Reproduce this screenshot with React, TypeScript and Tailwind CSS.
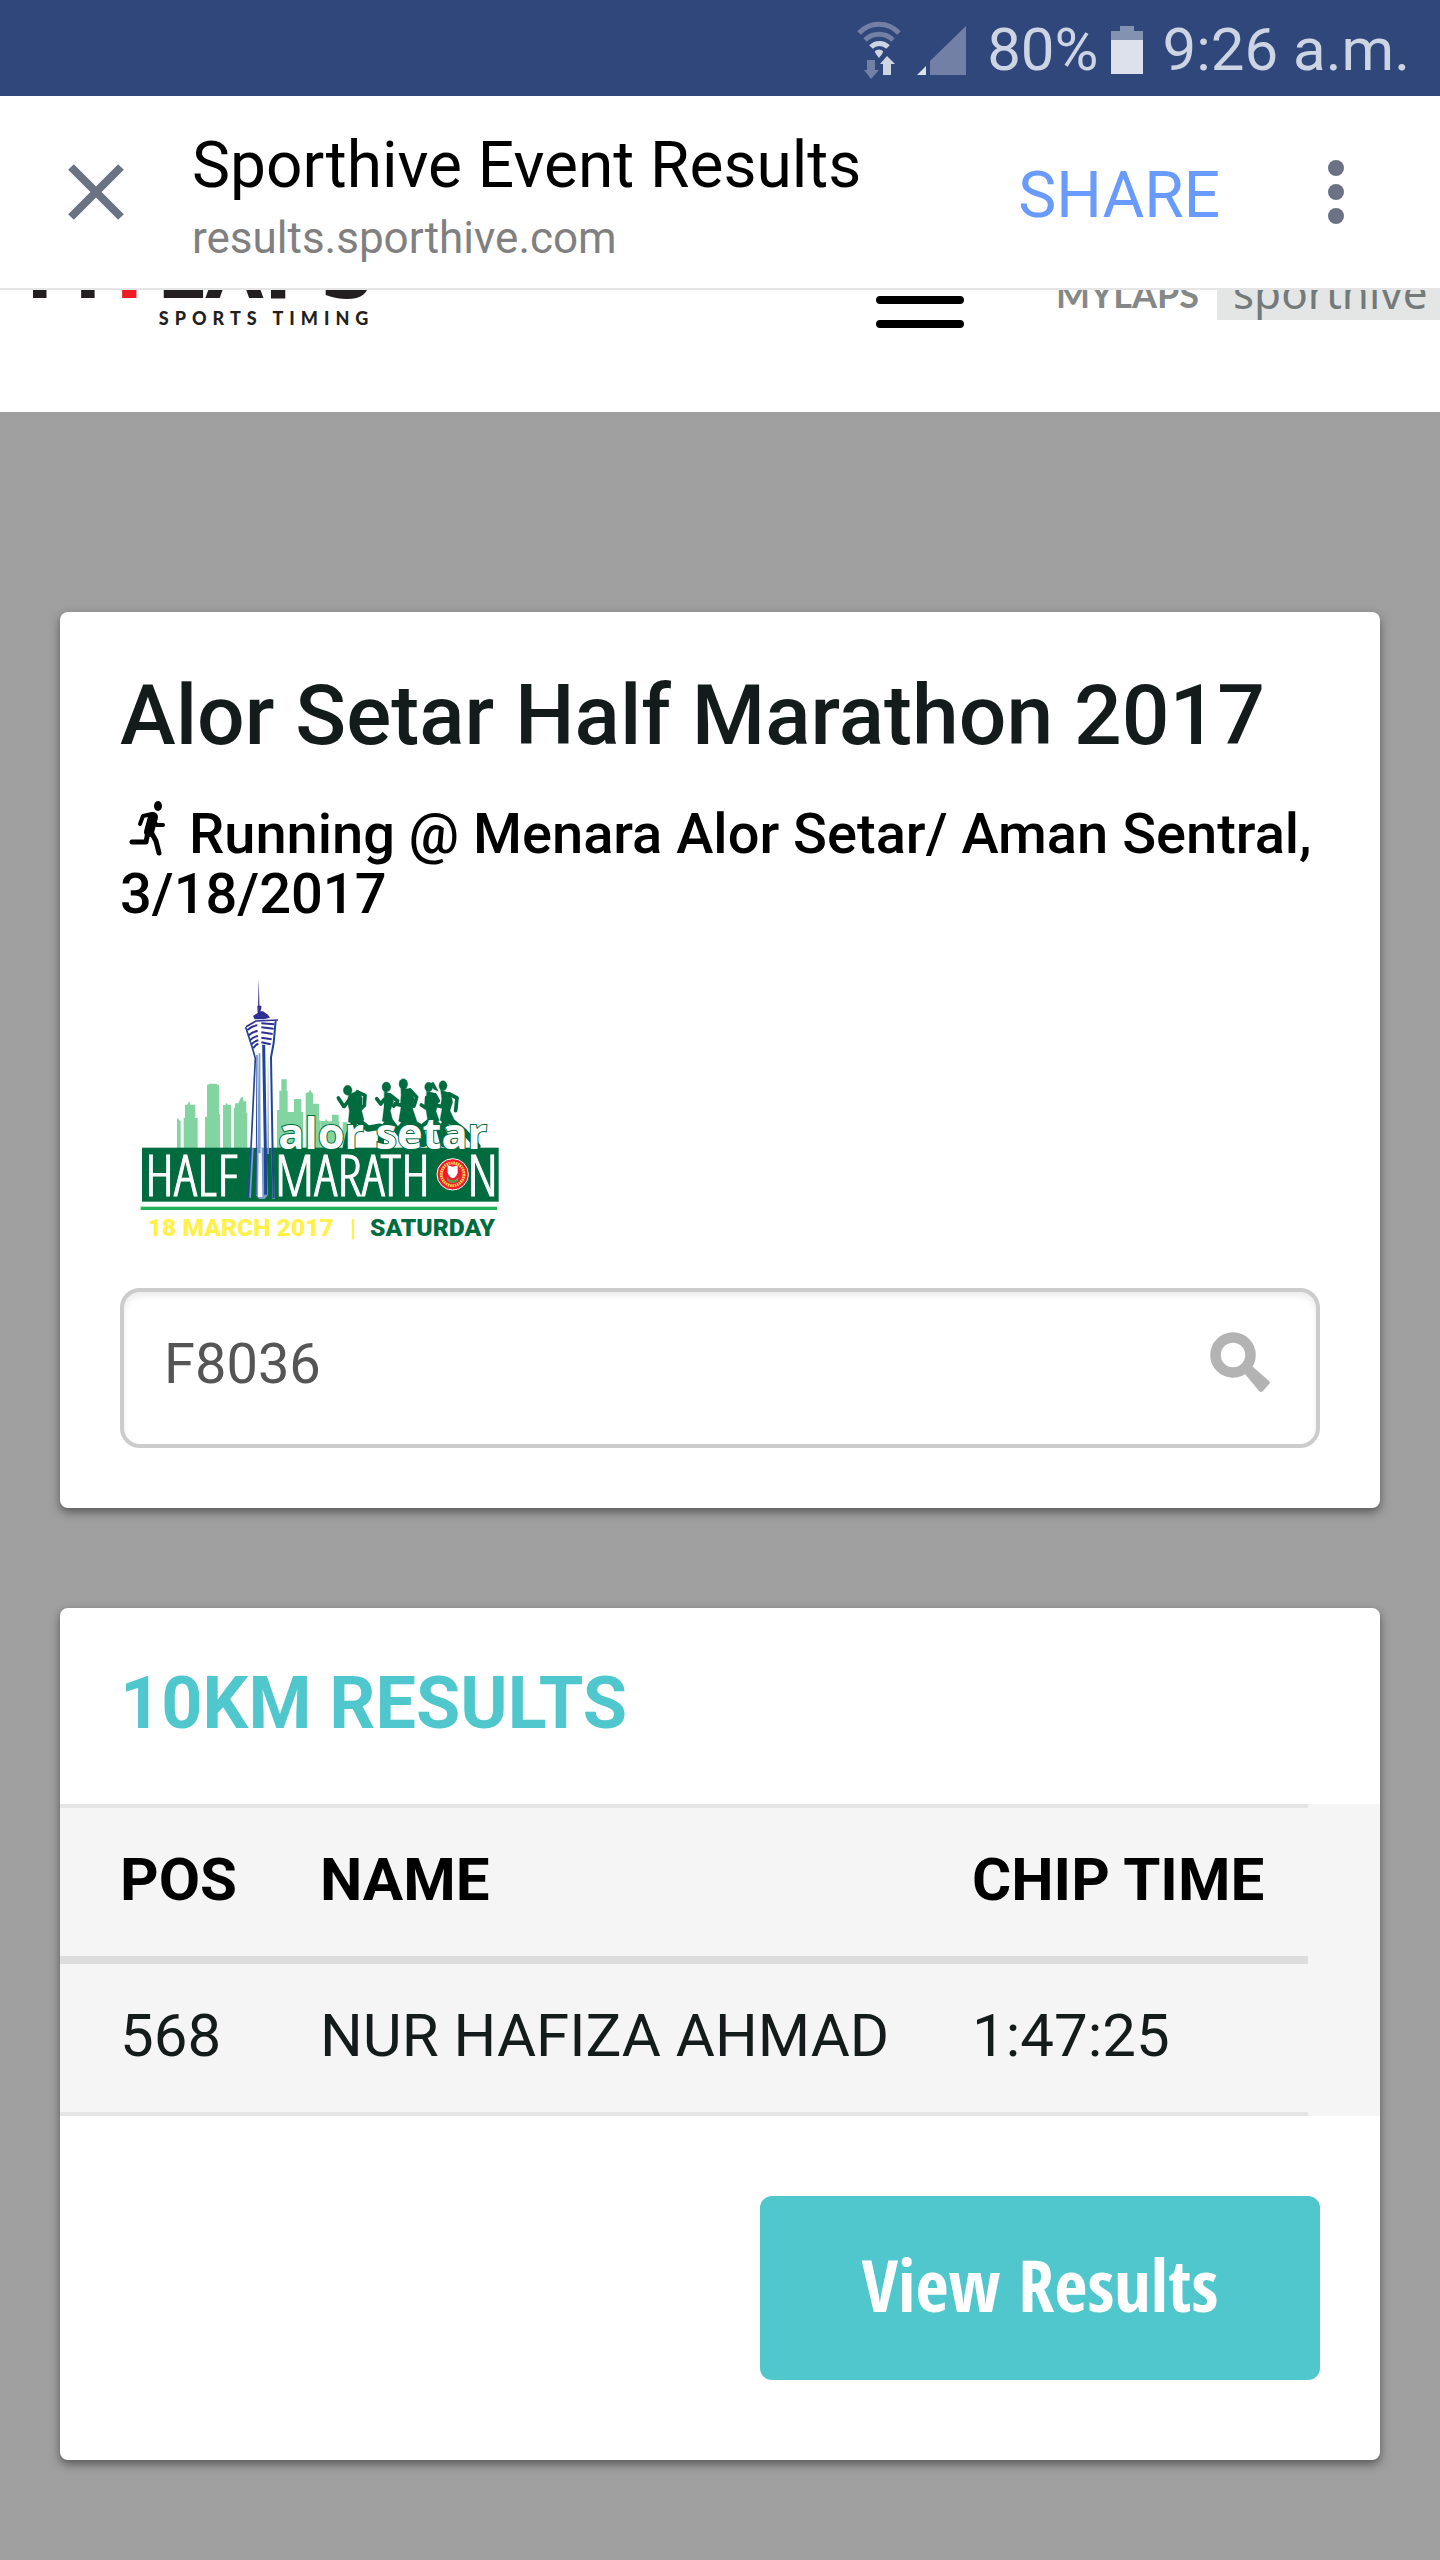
import { useState } from "react";

const results = [{ pos: "568", name: "NUR HAFIZA AHMAD", time: "1:47:25" }];

function WifiIcon() {
  return (
    <svg aria-hidden="true" viewBox="0 0 44 60" className="h-[60px] w-11" fill="none">
      <path d="M2 13a27 27 0 0 1 40 0" stroke="#7180a4" strokeWidth="5" />
      <path d="M8 20a20 20 0 0 1 28 0" stroke="#7180a4" strokeWidth="5" />
      <path d="M14 27a12 12 0 0 1 17 0" stroke="#cdd4e3" strokeWidth="5" />
      <path d="M18 31a6 6 0 0 1 8 0c0 3-2 4-4 7-2-3-4-4-4-7Z" fill="#cdd4e3" />
      <path d="M10 40h8v10h4l-8 9-7-9h3Z" fill="#7180a4" />
      <path d="M26 55h8V44h4l-8-8-7 8h3Z" fill="#cdd4e3" />
    </svg>
  );
}

function SignalIcon() {
  return (
    <svg aria-hidden="true" viewBox="0 0 50 50" className="h-[50px] w-[50px]">
      <path d="M13 36 49 1v49H13Z" fill="#7180a4" />
      <path d="M0 50l9-9v9Z" fill="#dde1eb" />
    </svg>
  );
}

function BatteryIcon() {
  return (
    <svg aria-hidden="true" viewBox="0 0 32 48" className="h-12 w-8">
      <path d="M0 5h9V0h14v5h9v10H0Z" fill="#8492b2" />
      <path d="M0 14h32v34H0Z" fill="#dde1eb" />
    </svg>
  );
}

function RunnerIcon() {
  return (
    <svg
      aria-hidden="true"
      viewBox="0 0 36 56"
      className="-mt-4 mr-6 ml-[9px] inline-block h-14 w-9 align-[-4px]"
      fill="none"
      stroke="#000"
      strokeLinecap="round"
      strokeLinejoin="round"
    >
      <ellipse cx="29" cy="5" rx="4" ry="5" fill="#000" stroke="none" />
      <path d="M11 23l3-8 9-2" strokeWidth="4" />
      <path d="M24 16l-4 15" strokeWidth="10" />
      <path d="M25 21l3 3h6" strokeWidth="4" />
      <path d="M19 31l-2 10H3" strokeWidth="5" />
      <path d="M22 31l5 9 3 12" strokeWidth="5" />
    </svg>
  );
}

function SearchIcon() {
  return (
    <svg aria-hidden="true" viewBox="0 0 60 61" className="h-[61px] w-[60px]">
      <circle cx="23" cy="23" r="17.500" fill="none" stroke="#b3b3b3" strokeWidth="10.500" />
      <path d="M42 34 59 49q2 2 0 3l-6 7q-2 2-4 0L35 42Z" fill="#b3b3b3" />
    </svg>
  );
}

function EventLogo() {
  return (
    <svg
      role="img"
      aria-label="Alor Setar Half Marathon, 18 March 2017, Saturday"
      viewBox="30 0 1230 840"
      className="mt-9 h-[280px] w-[410px]"
    >
      {/* skyline */}
      <g fill="#82d5a1">
        <path d="M201 474l11 10v82h-11ZM221 566v-92h4v-40h7l5-11 4 11h15v40h7v92Z" />
        <path d="M285 566v-96h6v-94l8-5h18l10 5v86h3v104ZM339 566V435h7l4-7 4 7h9v131ZM372 566V443h3v-13h10l8-18h6l2 12h8v36h3v106Z" />
        <path d="M501 566V450h7v-58h6v-34h16v34h3v64h12v110ZM545 566V456h7v-39h22v39h5v110ZM587 480v-80l10-4 3-8 4 8 5 5v30h18v50h4v85h-44Z" />
        <path d="M631 566v-83h14l4-7 4 8h13v-20h20v20h2v82ZM698 487h14v80h-14Z" />
      </g>

      {/* runners */}
      <g fill="#006b3f" stroke="#006b3f" strokeLinecap="round" strokeLinejoin="round">
        <g strokeWidth="1">
          <ellipse cx="713" cy="391" rx="13" ry="15" />
          <ellipse cx="829" cy="381" rx="13" ry="15" />
          <ellipse cx="880" cy="372" rx="13" ry="16" />
          <ellipse cx="956" cy="381" rx="12" ry="14" />
          <ellipse cx="999" cy="377" rx="12" ry="15" />
          <path d="M962 370l8-4 15 28-14-6Z" />
          <path d="M717 403l28-11 12 22-2 38 7 28-25 14-22-8 3-34-6-30Z" />
          <path d="M823 394l20 8 8 22-10 28 10 40-34-8 5-44Z" />
          <path d="M873 386l28 0 12 30-5 30 12 36-30 14-24-12 8-48Z" />
          <path d="M950 394l26 6 10 22-8 32 10 28-34 6-6-40Z" />
          <path d="M992 390l30 10 6 26-8 26 16 34-30 10-16-16 8-44Z" />
        </g>
        <g fill="none" strokeWidth="11">
          <path d="M742 396l23 10-2 30-11 11M722 414l-20 26-17-26" />
          <path d="M840 405l23 18-12 15M823 418l-11 14-12-16" />
          <path d="M900 390l20 22-8 26M878 412l-2 24-20-4" />
          <path d="M975 405l10 18M950 412l-2 32-14-9" />
          <path d="M1018 402l23 12-4 38M1000 420l-4 20-28-6" />
        </g>
        <g fill="none" strokeWidth="19">
          <path d="M742 480l32 26 36-6M735 484l-18 38-9 38" />
          <path d="M838 482l-24 30-2 44M842 486l30 38 14 34" />
          <path d="M893 480l-25 28 20 46M900 482l32 20 12 48" />
          <path d="M968 478l-34 26 4 48M972 484l26 28 20 40" />
          <path d="M1018 478l-30 30 12 44M1022 482l42 34 38 42" />
        </g>
      </g>

      <rect x="96" y="563" width="1070" height="162" fill="#006b3f" />
      <rect x="92" y="740" width="1069" height="10" fill="#22b35b" />

      {/* tower */}
      <path
        d="M430 265l5 40-14 258h66l-4-258 8-60 8-64-56-4-34 14Z"
        fill="#fff"
      />
      <path d="M421 563l-7 148 9 3 8-151ZM440 563l-3 142 10 12h17l10-12-4-142ZM484 563l3 154h8l-6-154Z" fill="#7f9bc9" />
      <path d="M446 563l-2 148h13l-2-148Z" fill="#fff" />
      <path d="M446 55l3 100h-5Z" fill="#2e3192" />
      <path d="M442 137h12v8l-3 9h8l15 10 6 9-18 5h-28l-5-10 14-9Z" fill="#2e3192" />
      <g fill="none" stroke="#2e3192">
        <path d="M408 200l30-17 66-3" strokeWidth="5" />
        <path
          d="M412 210q16-13 30-14M454 190l39 3M416 226q12-11 27-13M454 202l37 4M420 241q10-11 24-13M454 217l34 5M425 253q8-10 20-12M454 233l31 5M430 265q7-12 15-14M454 247l28 6"
          strokeWidth="6"
        />
      </g>
      <g fill="none" stroke="#1f4596">
        <path d="M407 201l20 62 9 32-14 290-7 126" strokeWidth="5" />
        <path d="M497 182l-6 67-8 43 5 293 3 130" strokeWidth="6" />
        <path d="M461 254l5 310 1 140" strokeWidth="9" />
        <path d="M441 285l-2 300-1 120" strokeWidth="3" />
      </g>
      <path d="M446 280l-4 300h10l-1-300ZM474 262l3 320h-5Z" fill="#7f9bc9" />

      {/* lettering */}
      <g
        fill="#fff"
        stroke="#fff"
        strokeWidth="3"
        className="font-['Open_Sans_Condensed_Light','Open_Sans_Condensed','Open_Sans',sans-serif]"
      >
        <text x="105" y="707" fontSize="174" fontWeight="300">
          HALF
        </text>
        <text x="494" y="707" fontSize="174" fontWeight="300">
          MARATH
        </text>
        <text x="1072" y="707" fontSize="174" fontWeight="300">
          N
        </text>
      </g>
      <text
        x="505"
        y="567"
        fontSize="130"
        fontWeight="700"
        fill="#fff"
        stroke="#006b3f"
        strokeWidth="6"
        paintOrder="stroke"
        className="font-['Open_Sans',sans-serif]"
      >
        alor setar
      </text>
      <g fontSize="74" fontWeight="900" className="font-[Roboto,sans-serif]">
        <text x="113" y="827" fill="#fff04b">
          18 MARCH 2017
        </text>
        <text x="720" y="827" fill="#fff04b">
          |
        </text>
        <text x="780" y="827" fill="#006b3f">
          SATURDAY
        </text>
      </g>

      {/* state crest */}
      <circle cx="1028" cy="643" r="47" fill="#f5192d" stroke="#fff" strokeWidth="3" />
      <circle cx="1028" cy="643" r="34" fill="none" stroke="#fcd34a" strokeWidth="9" strokeDasharray="5 2" />
      <path d="M1010 650q18 22 36 0l-2 12q-16 14-32 0Z" fill="#4ca64c" />
      <path d="M1013 616l15 4 15-4v22q-3 12-15 17-12-5-15-17Z" fill="#fff" />
    </svg>
  );
}

function StatusBar() {
  return (
    <div className="flex h-24 items-center justify-end bg-[#2f477a] pt-1 pr-[30px] text-[60px] leading-[72px] text-[#cdd4e3]">
      <WifiIcon />
      <span className="ml-4">
        <SignalIcon />
      </span>
      <span className="ml-5">80%</span>
      <span className="ml-3">
        <BatteryIcon />
      </span>
      <span className="ml-5">9:26 a.m.</span>
    </div>
  );
}

function BrowserBar() {
  return (
    <header className="flex h-[194px] items-center border-b-2 border-[#e5e5e5] bg-white pr-24 pl-[68px]">
      <button type="button" aria-label="Close">
        <svg viewBox="0 0 56 56" className="h-14 w-14" stroke="#6b7284" strokeWidth="8">
          <path d="M3 3l50 50M53 3 3 53" />
        </svg>
      </button>
      <div className="ml-[68px] flex-1 pt-2">
        <h1 className="text-[64px] leading-[72px] text-black">Sporthive Event Results</h1>
        <p className="mt-3 text-[44px] leading-[48px] text-[#808080]">results.sporthive.com</p>
      </div>
      <button type="button" className="pt-2 text-[64px] leading-[72px] text-[#699bff]">
        SHARE
      </button>
      <button type="button" aria-label="More options" className="ml-[108px] flex flex-col gap-2">
        <span className="h-4 w-4 rounded-full bg-[#6b7284]" />
        <span className="h-4 w-4 rounded-full bg-[#6b7284]" />
        <span className="h-4 w-4 rounded-full bg-[#6b7284]" />
      </button>
    </header>
  );
}

// The page is scrolled a little, so the logos start above the visible strip.
function SiteNav() {
  return (
    <nav className="flex h-[122px] items-start overflow-hidden bg-white">
      <a href="#home" className="-mt-[54px] ml-[26px] flex flex-col items-end text-[#231f20]">
        <span className="font-['DejaVu_Sans',sans-serif] text-[76px] leading-[72px] font-bold">
          M<span className="text-[#ed1c24]">Y</span>LAPS
        </span>
        <span className="font-[Lato,sans-serif] text-[18px] leading-5 font-black tracking-[6px]">
          SPORTS TIMING
        </span>
      </a>
      <button type="button" aria-label="Menu" className="mt-[6px] ml-auto flex flex-col gap-4">
        <span className="h-2 w-[88px] rounded-full bg-black" />
        <span className="h-2 w-[88px] rounded-full bg-black" />
      </button>
      <a
        href="#mylaps"
        className="-mt-4 ml-[92px] font-[Lato,sans-serif] text-[36px] leading-10 font-bold text-[#858888]"
      >
        MYLAPS
      </a>
      <a
        href="#sporthive"
        className="ml-[18px] flex h-[30px] w-[223px] items-start overflow-hidden bg-[#e4e6e6] pl-4 text-[#747a7a]"
      >
        <span className="-mt-5 font-['Noto_Sans',sans-serif] text-[44px] leading-[44px]">sporthive</span>
      </a>
    </nav>
  );
}

function EventCard() {
  const [query, setQuery] = useState("F8036");

  return (
    <section className="rounded-lg bg-white px-15 pt-14 pb-15 shadow-[0_4px_10px_rgba(0,0,0,0.45)]">
      <h2 className="text-[84px] leading-[96px] font-medium text-[#141c1b]">
        Alor Setar Half Marathon 2017
      </h2>
      <p className="mt-10 text-[56px] leading-[60px] font-medium text-black">
        <RunnerIcon />
        Running @ Menara Alor Setar/ Aman Sentral, 3/18/2017
      </p>
      <EventLogo />
      <form
        onSubmit={(e) => e.preventDefault()}
        className="mt-12 flex h-40 items-center rounded-[20px] border-4 border-[#ccc] bg-white pr-[46px] pl-10 shadow-[inset_0_4px_6px_rgba(0,0,0,0.08)]"
      >
        <input
          type="text"
          aria-label="Search by name or bib"
          value={query}
          onChange={(e) => setQuery(e.target.value)}
          className="min-w-0 flex-1 bg-transparent pb-2 text-[56px] leading-[72px] text-[#555] outline-none"
        />
        <button type="submit" aria-label="Search" className="pb-3">
          <SearchIcon />
        </button>
      </form>
    </section>
  );
}

function ResultsCard() {
  return (
    <section className="mt-25 rounded-lg bg-white pt-15 pb-20 shadow-[0_4px_10px_rgba(0,0,0,0.45)]">
      <h2 className="px-15 text-[72px] leading-[72px] font-bold text-[#50c7cd]">10KM RESULTS</h2>
      <div className="mt-16 bg-[#f5f5f5] pr-[72px]">
        <table className="w-full table-fixed border-separate border-spacing-0 text-left text-[60px] leading-[72px]">
          <thead>
            <tr className="text-black">
              <th className="h-40 w-[260px] border-t-4 border-b-8 border-t-[#e5e5e5] border-b-[#ddd] pb-1 pl-15 font-bold">
                POS
              </th>
              <th className="border-t-4 border-b-8 border-t-[#e5e5e5] border-b-[#ddd] pb-1 font-bold">
                NAME
              </th>
              <th className="w-[336px] border-t-4 border-b-8 border-t-[#e5e5e5] border-b-[#ddd] pb-1 font-bold">
                CHIP TIME
              </th>
            </tr>
          </thead>
          <tbody>
            {results.map((row) => (
              <tr key={row.pos} className="text-[#141c1b]">
                <td className="h-[152px] border-b-4 border-[#e5e5e5] pb-1 pl-15">{row.pos}</td>
                <td className="border-b-4 border-[#e5e5e5] pb-1">{row.name}</td>
                <td className="border-b-4 border-[#e5e5e5] pb-1">{row.time}</td>
              </tr>
            ))}
          </tbody>
        </table>
      </div>
      <div className="mt-20 flex justify-end px-15">
        <button
          type="button"
          className="h-[184px] w-[560px] rounded-xl bg-[#50c7cd] pb-2 font-['Open_Sans_Condensed','Open_Sans',sans-serif] text-[72px] leading-[72px] font-bold text-white"
        >
          View Results
        </button>
      </div>
    </section>
  );
}

export default function App() {
  return (
    <div className="min-h-screen bg-[#9f9f9f] font-[Roboto,sans-serif]">
      <StatusBar />
      <BrowserBar />
      <SiteNav />
      <main className="px-15 pt-50 pb-25">
        <EventCard />
        <ResultsCard />
      </main>
    </div>
  );
}
